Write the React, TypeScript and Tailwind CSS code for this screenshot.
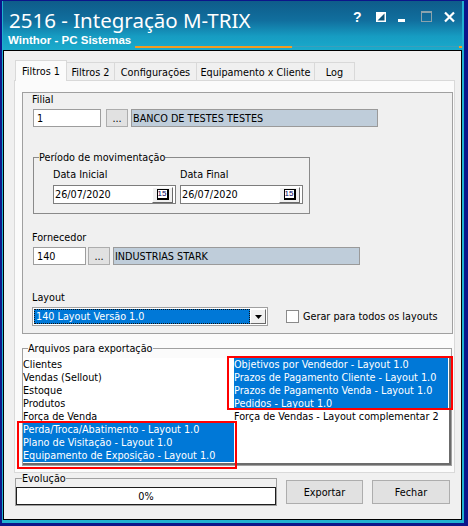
import React from "react";

const ui = "font-['DejaVu_Sans_Condensed','Liberation_Sans',sans-serif] text-[10.75px] leading-[13px] text-black";
const raised = "border border-t-white border-l-white border-r-[#696969] border-b-[#696969] bg-[#f0f0f0]";

type FileRow = { label: string; selected?: boolean };

const tabs = [
  { name: "Filtros 1", width: "w-[52px]", active: true },
  { name: "Filtros 2", width: "w-[48px]" },
  { name: "Configurações", width: "w-[82px]" },
  { name: "Equipamento x Cliente", width: "w-[118px]" },
  { name: "Log", width: "w-[40px]" },
];

const leftFiles: FileRow[] = [
  { label: "Clientes" },
  { label: "Vendas (Sellout)" },
  { label: "Estoque" },
  { label: "Produtos" },
  { label: "Força de Venda" },
  { label: "Perda/Troca/Abatimento - Layout 1.0", selected: true },
  { label: "Plano de Visitação - Layout 1.0", selected: true },
  { label: "Equipamento de Exposição - Layout 1.0", selected: true },
];

const rightFiles: FileRow[] = [
  { label: "Objetivos por Vendedor - Layout 1.0", selected: true },
  { label: "Prazos de Pagamento Cliente - Layout 1.0", selected: true },
  { label: "Prazos de Pagamento Venda - Layout 1.0", selected: true },
  { label: "Pedidos - Layout 1.0", selected: true },
  { label: "Força de Vendas - Layout complementar 2" },
];

// help, theme, minimize, maximize (disabled) and close
function TitleButtons() {
  return (
    <svg width="112" height="16" viewBox="0 0 112 16" className="shrink-0">
      <text x="3" y="12" fill="#fff" fontSize="14" fontWeight="bold" fontFamily="Liberation Sans, Arial, sans-serif">?</text>
      <rect x="26" y="2" width="10" height="10" fill="#fff" />
      <polygon points="34.5,3.5 34.5,10.5 27.5,10.5" fill="#0e5478" />
      <rect x="48" y="9" width="7" height="3" fill="#fff" />
      <rect x="71.5" y="1.5" width="10" height="10" fill="none" stroke="#8aa3ad" strokeWidth="1" />
      <rect x="71" y="1" width="11" height="2" fill="#8aa3ad" />
      <path d="M95 2.5 L104 11.5 M104 2.5 L95 11.5" stroke="#fff" strokeWidth="2.2" />
    </svg>
  );
}

function CodeEdit({ value, width }: { value: string; width: string }) {
  return <div className={`${width} h-[18px] border border-[#9d9d9d] bg-white pl-[3px] flex items-center`}>{value}</div>;
}

function DotsButton() {
  return (
    <div className="w-[22px] h-[18px] border border-[#adadad] bg-[#e1e1e1] flex items-center justify-center">...</div>
  );
}

function Description({ text }: { text: string }) {
  return <div className="w-[247px] h-[18px] border border-[#9a9a9a] bg-[#bfcdda] pl-[1px] flex items-center">{text}</div>;
}

function DateEdit({ value }: { value: string }) {
  return (
    <div className="w-[123px] h-[19px] border border-[#7d7d7d] bg-white flex items-center pl-[1px] pr-[2px]">
      <span>{value}</span>
      <div className={`ml-auto w-[21px] h-[16px] ${raised} flex items-center justify-center`}>
        <span className="w-[12px] h-[11px] bg-white border border-black border-r-2 border-b-2 text-[8px] leading-[8px] text-[#000060] font-['Liberation_Sans',sans-serif] flex items-center justify-center">
          15
        </span>
      </div>
    </div>
  );
}

function FileColumn({ rows }: { rows: FileRow[] }) {
  return (
    <div className="flex flex-col">
      {rows.map((row) => (
        <div
          key={row.label}
          className={`h-[13px] whitespace-nowrap ${row.selected ? "bg-[#0078d7] text-white" : ""}`}
        >
          {row.label}
        </div>
      ))}
    </div>
  );
}

export default function App() {
  return (
    <div className={`w-[468px] h-[526px] bg-[#0c168a] pt-[1px] pl-[2px] pr-[4px] pb-[3px] ${ui}`}>
      <div className="h-full flex flex-col bg-[#1fb2d0] pl-[1px] pr-[2px] pb-[3px]">
        {/* Title bar */}
        <div className="h-[49px] shrink-0 flex flex-col pl-[6px] pt-[9px] pb-[2px] bg-[linear-gradient(180deg,#0e5c8a_0%,#116f9e_40%,#169cc2_72%,#1aabcc_100%)]">
          <div className="flex justify-between h-[20px]">
            <span className="font-['Noto_Sans','Liberation_Sans',sans-serif] text-[20.5px] leading-[20px] text-white">
              2516 - Integração M-TRIX
            </span>
            <TitleButtons />
          </div>
          <div className="mt-[4px] h-[14px] flex -ml-[1px]">
            <span className="w-[127px] shrink-0 font-['Liberation_Sans',Arial,sans-serif] font-bold text-[11.5px] leading-[12px] text-white">
              Winthor - PC Sistemas
            </span>
            <div className="self-end w-[157px] h-[2px] bg-[#f39b1f]" />
            <div className="self-end flex-1 h-[1px] mb-[1px] bg-[#3a9fbc]" />
            <div className="self-end w-[3px] h-[2px] bg-[#f39b1f]" />
          </div>
        </div>

        {/* Client area */}
        <div className="flex-1 border border-black bg-[#f0f0f0] flex flex-col pt-[9px]">
          {/* Tabs */}
          <div className="flex items-end h-[20px] pl-[11px]">
            {tabs.map((tab, i) =>
              tab.active ? (
                <div
                  key={tab.name}
                  className={`${tab.width} h-[21px] -mb-[1px] relative z-10 bg-[#fbfbfb] border border-b-0 border-[#d9d9d9] flex items-center justify-center`}
                >
                  {tab.name}
                </div>
              ) : (
                <div
                  key={tab.name}
                  className={`${tab.width} h-[18px] bg-[#f0f0f0] border-t border-r border-[#d9d9d9] ${i === 0 ? "border-l" : ""} flex items-center justify-center pt-[2px]`}
                >
                  {tab.name}
                </div>
              )
            )}
          </div>

          {/* Tab sheet */}
          <div className="ml-[10px] w-[441px] h-[393px] shrink-0 border border-[#d9d9d9] bg-[#fbfbfb] pl-[7px] pt-[11px]">
            <div className="w-[431px] h-[242px] border border-[#a0a0a0] bg-[#f0f0f0] px-[10px] flex flex-col">
              <span className="-ml-[1px]">Filial</span>
              <div className="mt-[3px] flex">
                <CodeEdit value="1" width="w-[68px]" />
                <div className="ml-[5px]">
                  <DotsButton />
                </div>
                <div className="ml-[3px]">
                  <Description text="BANCO DE TESTES TESTES" />
                </div>
              </div>

              <fieldset className="mt-[24px] w-[277px] border border-[#8a8a8a] pb-[9px]">
                <legend className="ml-[5px] leading-[13px]">Período de movimentação</legend>
                <div className="mt-[4px] pl-[19px] flex gap-[4px]">
                  <div className="flex flex-col w-[123px]">
                    <span>Data Inicial</span>
                    <div className="mt-[4px]">
                      <DateEdit value="26/07/2020" />
                    </div>
                  </div>
                  <div className="flex flex-col w-[123px]">
                    <span>Data Final</span>
                    <div className="mt-[4px]">
                      <DateEdit value="26/07/2020" />
                    </div>
                  </div>
                </div>
              </fieldset>

              <span className="mt-[17px] -ml-[1px]">Fornecedor</span>
              <div className="mt-[3px] flex">
                <CodeEdit value="140" width="w-[53px]" />
                <div className="ml-[2px]">
                  <DotsButton />
                </div>
                <div className="ml-[3px]">
                  <Description text="INDUSTRIAS STARK" />
                </div>
              </div>

              <span className="mt-[26px] -ml-[1px]">Layout</span>
              <div className="mt-[3px] flex items-center -ml-[1px]">
                <div className="w-[236px] h-[19px] border border-[#a0a0a0] bg-white p-[1px] flex">
                  <div className="flex-1 bg-[#0078d7] border border-dotted border-[#101010] text-white pl-[1px] flex items-center">
                    140 Layout Versão 1.0
                  </div>
                  <div className={`w-[16px] ${raised} flex items-center justify-center`}>
                    <svg width="7" height="4" viewBox="0 0 7 4">
                      <polygon points="0,0 7,0 3.5,4" fill="#000" />
                    </svg>
                  </div>
                </div>
                <div className="ml-[18px] w-[13px] h-[13px] border border-[#8a8a8a] bg-white" />
                <span className="ml-[4px]">Gerar para todos os layouts</span>
              </div>
            </div>

            <fieldset className="mt-[8px] w-[430px] border border-[#a0a0a0]">
              <legend className="ml-[5px] leading-[13px]">Arquivos para exportação</legend>
              <div className="relative mt-[3px] pb-[1px] border-r-2 border-b-2 border-[#6b6b6b] bg-white grid grid-cols-[211px_214px]">
                <FileColumn rows={leftFiles} />
                <FileColumn rows={rightFiles} />
                <div className="absolute left-[204px] -top-[2px] w-[226px] h-[54px] border-2 border-[#ff0000]" />
                <div className="absolute -left-[6px] top-[63px] w-[220px] h-[48px] border-2 border-[#ff0000]" />
              </div>
            </fieldset>
          </div>

          {/* Progress and actions */}
          <div className="flex items-start pl-[11px] -mt-[1px]">
            <fieldset className="w-[262px] border border-[#a0a0a0]">
              <legend className="ml-[6px] leading-[13px]">Evolução</legend>
              <div className="mt-[2px] h-[18px] border border-[#1e1e1e] bg-white flex items-center justify-center">0%</div>
            </fieldset>
            <button className="ml-[9px] mt-[8px] w-[77px] h-[24px] border border-[#adadad] bg-[#e1e1e1]">Exportar</button>
            <button className="ml-[9px] mt-[8px] w-[78px] h-[24px] border border-[#adadad] bg-[#e1e1e1]">Fechar</button>
          </div>
        </div>
      </div>
    </div>
  );
}
